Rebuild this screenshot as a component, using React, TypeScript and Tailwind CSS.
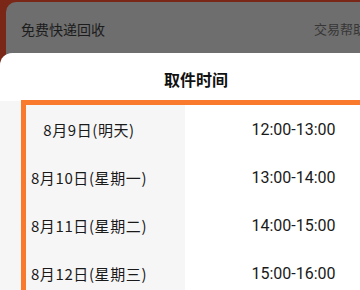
import React from "react";

const rows = [
  { d: "8月9日(明天)", t: "12:00-13:00" },
  { d: "8月10日(星期一)", t: "13:00-14:00" },
  { d: "8月11日(星期二)", t: "14:00-15:00" },
  { d: "8月12日(星期三)", t: "15:00-16:00" },
  { d: "8月13日(星期四)", t: "16:00-17:00" },
];

export default function App() {
  return (
    <div
      className="relative w-[360px] h-[290px] overflow-hidden bg-[#7a2718]"
      style={{ fontFamily: '"Noto Sans CJK SC", "Noto Sans", sans-serif' }}
    >
      <div className="w-[392px]">
        <div className="ml-[6px] mt-[2px] h-[120px] rounded-tl-[10px] bg-[#6e6e6e] flex items-start justify-between pl-[15px] pr-[26px] pt-[17px]">
          <span className="text-[14px] leading-[20px] text-[#1c1c1c]">免费快递回收</span>
          <span className="text-[13px] leading-[20px] text-[#363636]">交易帮助</span>
        </div>
      </div>

      <div className="absolute left-0 top-[53px] w-[392px] h-[300px] rounded-t-[12px] bg-white">
        <div className="h-[48px] pt-[4px] flex items-center justify-center">
          <span className="text-[16px] font-bold text-[#111111]">取件时间</span>
        </div>
        <div className="flex">
          <div className="w-[185px] bg-[#f6f6f6] pt-[5px] pr-[7px]">
            {rows.map((r) => (
              <div key={r.d} className="h-[48px] flex items-center justify-center text-[15px] text-[#1a1a1a] tracking-[0.6px]">
                {r.d}
              </div>
            ))}
          </div>
          <div className="flex-1 pt-[5px] pl-[10px]">
            {rows.map((r) => (
              <div
                key={r.t}
                className="h-[48px] flex items-center justify-center text-[16px] text-[#1a1a1a]"
                style={{ fontFamily: 'Roboto, "Noto Sans", sans-serif' }}
              >
                {r.t}
              </div>
            ))}
          </div>
        </div>
      </div>

      <div className="absolute left-[21px] top-[100px] w-[400px] h-[260px] border-[5px] border-[#f97a2c] pointer-events-none" />
    </div>
  );
}
